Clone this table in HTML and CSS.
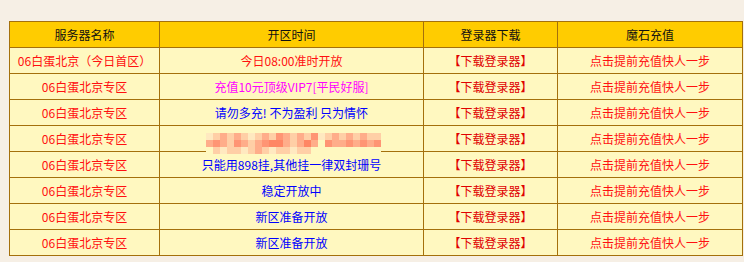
FILE: index.html
```html
<!DOCTYPE html>
<html lang="zh">
<head>
<meta charset="utf-8">
<link rel="stylesheet" href="styles.css">
</head>
<body>
<table class="srv">
  <thead>
    <tr><th class="c1">服务器名称</th><th class="c2">开区时间</th><th class="c3">登录器下载</th><th class="c4">魔石充值</th></tr>
  </thead>
  <tbody>
    <tr><td class="red">06白蛋北京（今日首区）</td><td class="red">今日08:00准时开放</td><td class="dl">【下载登录器】</td><td class="red">点击提前充值快人一步</td></tr>
    <tr><td class="red">06白蛋北京专区</td><td class="pink">充值10元顶级VIP7[平民好服]</td><td class="dl">【下载登录器】</td><td class="red">点击提前充值快人一步</td></tr>
    <tr><td class="red">06白蛋北京专区</td><td class="blue">请勿多充! 不为盈利 只为情怀</td><td class="dl">【下载登录器】</td><td class="red">点击提前充值快人一步</td></tr>
    <tr><td class="red">06白蛋北京专区</td><td class="blurcell">
      <div class="mosaic">
        <div class="mrow r1"><i class="e"></i><i class="l"></i><i class="m"></i><i class="l"></i><i class="m"></i><i class="l"></i><i class="e"></i><i class="l"></i><i class="m"></i><i class="l"></i><i class="s"></i><i class="m"></i><i class="l"></i><i class="m"></i><i class="l"></i><i class="s"></i><i class="e"></i><i class="l"></i><i class="m"></i><i class="l"></i><i class="m"></i><i class="l"></i><i class="m"></i><i class="l"></i><i class="l"></i></div>
        <div class="mrow r2"><i class="m"></i><i class="s"></i><i class="m"></i><i class="l"></i><i class="s"></i><i class="m"></i><i class="l"></i><i class="m"></i><i class="s"></i><i class="x"></i><i class="x"></i><i class="m"></i><i class="l"></i><i class="m"></i><i class="x"></i><i class="m"></i><i class="g"></i><i class="s"></i><i class="m"></i><i class="m"></i><i class="s"></i><i class="m"></i><i class="s"></i><i class="m"></i><i class="s"></i></div>
        <div class="mrow r3"><i class="g"></i><i class="l"></i><i class="e"></i><i class="l"></i><i class="l"></i><i class="e"></i><i class="l"></i><i class="m"></i><i class="l"></i><i class="e"></i><i class="l"></i><i class="l"></i><i class="e"></i><i class="l"></i><i class="l"></i><i class="g"></i><i class="g"></i><i class="g"></i><i class="g"></i><i class="g"></i><i class="g"></i><i class="g"></i><i class="g"></i><i class="g"></i><i class="g"></i></div>
      </div>
    </td><td class="dl">【下载登录器】</td><td class="red">点击提前充值快人一步</td></tr>
    <tr><td class="red">06白蛋北京专区</td><td class="blue">只能用898挂,其他挂一律双封珊号</td><td class="dl">【下载登录器】</td><td class="red">点击提前充值快人一步</td></tr>
    <tr><td class="red">06白蛋北京专区</td><td class="blue">稳定开放中</td><td class="dl">【下载登录器】</td><td class="red">点击提前充值快人一步</td></tr>
    <tr><td class="red">06白蛋北京专区</td><td class="blue">新区准备开放</td><td class="dl">【下载登录器】</td><td class="red">点击提前充值快人一步</td></tr>
    <tr><td class="red">06白蛋北京专区</td><td class="blue">新区准备开放</td><td class="dl">【下载登录器】</td><td class="red">点击提前充值快人一步</td></tr>
  </tbody>
</table>
</body>
</html>
```
FILE: styles.css
```css
html, body {
  margin: 0;
  padding: 0;
  background: #f6efe5;
}
body {
  padding: 21px 0 0 9px;
  font-family: "Noto Sans CJK SC", "Microsoft YaHei", sans-serif;
  font-size: 12px;
}
.srv {
  border-collapse: collapse;
  width: 729px;
  table-layout: fixed;
  border: 1px solid #a4700c;
}
.srv th, .srv td {
  border: 1px solid #a4700c;
  text-align: center;
  padding: 0;
  height: 25px;
  line-height: 16px;
  white-space: nowrap;
}
.srv th {
  background: #ffcc00;
  color: #111;
  font-weight: normal;
}
.srv td {
  background: #fff8c0;
}
.c1 { width: 149px; }
.c2 { width: 263px; }
.c3 { width: 133px; }
.c4 { width: 184px; }
.red { color: #ff1010; }
.pink { color: #ff00ff; }
.blue { color: #0000ff; }
.dl { color: #e00000; }
.blurcell {
  position: relative;
}
.mosaic {
  position: absolute;
  left: 46px;
  top: 7px;
  width: 175px;
  z-index: 2;
}
.mrow {
  display: flex;
  height: 7px;
}
.mrow i {
  display: block;
  width: 7px;
  height: 7px;
}
.mrow .g { background: transparent; }
.mrow .e { background: #ffe9c0; }
.mrow .l { background: #ffcfa6; }
.mrow .m { background: #ffad8a; }
.mrow .s { background: #ff9574; }
.mrow .x { background: #ff8664; }
.r3 .g { background: #fff8c0; }
```
